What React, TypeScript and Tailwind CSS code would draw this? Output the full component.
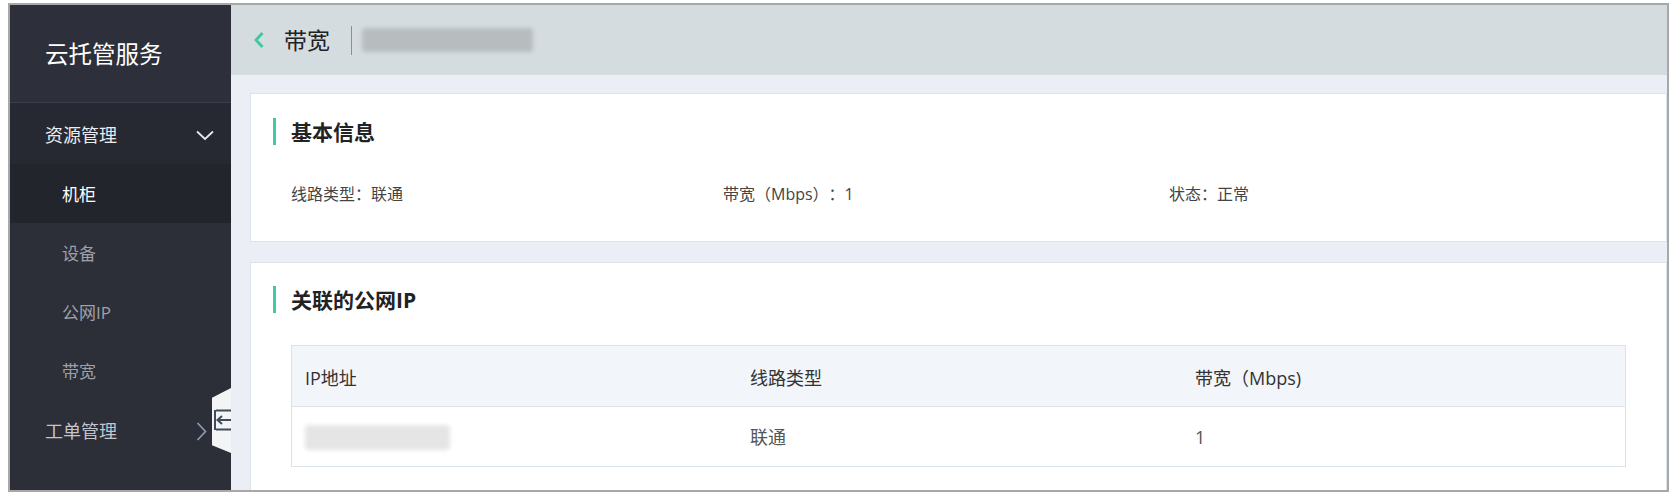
import React from "react";

const font = { fontFamily: '"Open Sans", "Noto Sans CJK SC", "Noto Sans", sans-serif' };

function ChevronDown() {
  return (
    <svg width="18" height="11" viewBox="0 0 18 11" fill="none">
      <path d="M1 1.5 L9 9 L17 1.5" stroke="#e8e8ea" strokeWidth="1.8" />
    </svg>
  );
}

function ChevronRight() {
  return (
    <svg width="11" height="19" viewBox="0 0 11 19" fill="none">
      <path d="M1.5 1 L9.5 9.5 L1.5 18" stroke="#8d9fb8" strokeWidth="1.6" />
    </svg>
  );
}

export default function App() {
  return (
    <div className="w-[1679px] h-[495px] bg-white overflow-hidden [text-spacing-trim:space-all]" style={font}>
      <div className="ml-[8px] mt-[3px] w-[1661px] h-[489px] border-2 border-[#a8a8a8] flex overflow-hidden">
        {/* Sidebar */}
        <aside className="relative w-[221px] shrink-0 bg-[#2c2e38] flex flex-col">
          <div className="h-[98px] bg-[#2d2f3a] border-b border-[#3b3d49] flex items-center pl-[35px] pt-[2px] text-[23.5px] text-white">
            云托管服务
          </div>
          <div className="h-[61px] bg-[#272932] flex items-center justify-between pl-[35px] pr-[17px] pt-[3px] text-[18px] text-[#ececee]">
            <span>资源管理</span>
            <ChevronDown />
          </div>
          <div className="h-[59px] bg-[#23252d] flex items-center pl-[52px] pt-[3px] text-[17px] text-white">
            机柜
          </div>
          <div className="h-[59px] flex items-center pl-[52px] pt-[3px] text-[17px] text-[#9ea1a9]">设备</div>
          <div className="h-[59px] flex items-center pl-[52px] pt-[3px] text-[17px] text-[#9ea1a9]">公网IP</div>
          <div className="h-[59px] flex items-center pl-[52px] pt-[3px] text-[17px] text-[#9ea1a9]">带宽</div>
          <div className="h-[59px] flex items-center justify-between pl-[35px] pr-[24px] pt-[3px] text-[18px] text-[#c3c5cb]">
            <span>工单管理</span>
            <ChevronRight />
          </div>
          {/* collapse tab */}
          <div className="absolute left-[202px] top-[383px] w-[19px] h-[65px] bg-[#f3f4f6] [clip-path:polygon(0_15%,100%_0,100%_100%,0_88%)]">
            <svg className="absolute left-[2px] top-[21px]" width="17" height="22" viewBox="0 0 17 22" fill="none">
              <path d="M2 1.5 H17" stroke="#3f4a5a" strokeWidth="2" />
              <path d="M2 20.5 H17" stroke="#3f4a5a" strokeWidth="2" />
              <path d="M4 11 H17" stroke="#3f4a5a" strokeWidth="2" />
              <path d="M8 7 L3.5 11 L8 15" stroke="#3f4a5a" strokeWidth="2" />
              <path d="M1 1 V21" stroke="#3f4a5a" strokeWidth="2" />
            </svg>
          </div>
        </aside>

        {/* Main */}
        <main className="flex-1 flex flex-col bg-[#ebeff5] overflow-hidden">
          <header className="h-[70px] shrink-0 bg-[#d5dcdf] flex items-center pl-[22px]">
            <svg width="12" height="18" viewBox="0 0 12 18" fill="none">
              <path d="M9.5 2 L3 9 L9.5 16" stroke="#3fc7a4" strokeWidth="2.8" />
            </svg>
            <span className="ml-[19px] text-[23px] text-[#222]">带宽</span>
            <div className="ml-[21px] w-px h-[29px] bg-[#8a8f93]" />
            <div className="ml-[10px] w-[171px] h-[24px] bg-[#b7bcbf] blur-[2px] rounded-sm" />
          </header>

          <div className="pl-[19px] pt-[18px] flex flex-col gap-[20px]">
            {/* Card 1 */}
            <section className="w-[1417px] h-[149px] shrink-0 bg-white border border-[#dde3ea] pl-[22px] pt-[24px]">
              <div className="flex items-center h-[27px]">
                <div className="w-[3px] h-[27px] bg-[#3ec9a7]" />
                <h2 className="ml-[15px] pt-[2px] text-[21px] font-bold text-[#222] leading-none">基本信息</h2>
              </div>
              <div className="mt-[37px] pl-[18px] flex text-[16px] leading-[24px] text-[#444]">
                <div className="w-[432px]">线路类型：联通</div>
                <div className="w-[446px]">带宽（Mbps）：1</div>
                <div>状态：正常</div>
              </div>
            </section>

            {/* Card 2 */}
            <section className="w-[1417px] h-[260px] shrink-0 bg-white border border-[#dde3ea] pl-[22px] pt-[23px]">
              <div className="flex items-center h-[27px]">
                <div className="w-[3px] h-[27px] bg-[#3ec9a7]" />
                <h2 className="ml-[15px] pt-[2px] text-[21px] font-bold text-[#222] leading-none">关联的公网IP</h2>
              </div>
              <div className="mt-[32px] ml-[18px] w-[1335px] border border-[#dbe2ea] text-[18px]">
                <div className="h-[61px] bg-[#f2f5f9] border-b border-[#dbe2ea] flex items-center pt-[5px] text-[#333]">
                  <div className="w-[445px] pl-[13px]">IP地址</div>
                  <div className="w-[445px] pl-[13px]">线路类型</div>
                  <div className="pl-[13px]">带宽（Mbps)</div>
                </div>
                <div className="h-[59px] flex items-center pt-[2px] text-[#555]">
                  <div className="w-[445px] pl-[13px]">
                    <div className="w-[145px] h-[25px] bg-[#e6e5e6] blur-[2px] rounded-sm" />
                  </div>
                  <div className="w-[445px] pl-[13px]">联通</div>
                  <div className="pl-[13px]">1</div>
                </div>
              </div>
            </section>
          </div>
        </main>
      </div>
    </div>
  );
}
